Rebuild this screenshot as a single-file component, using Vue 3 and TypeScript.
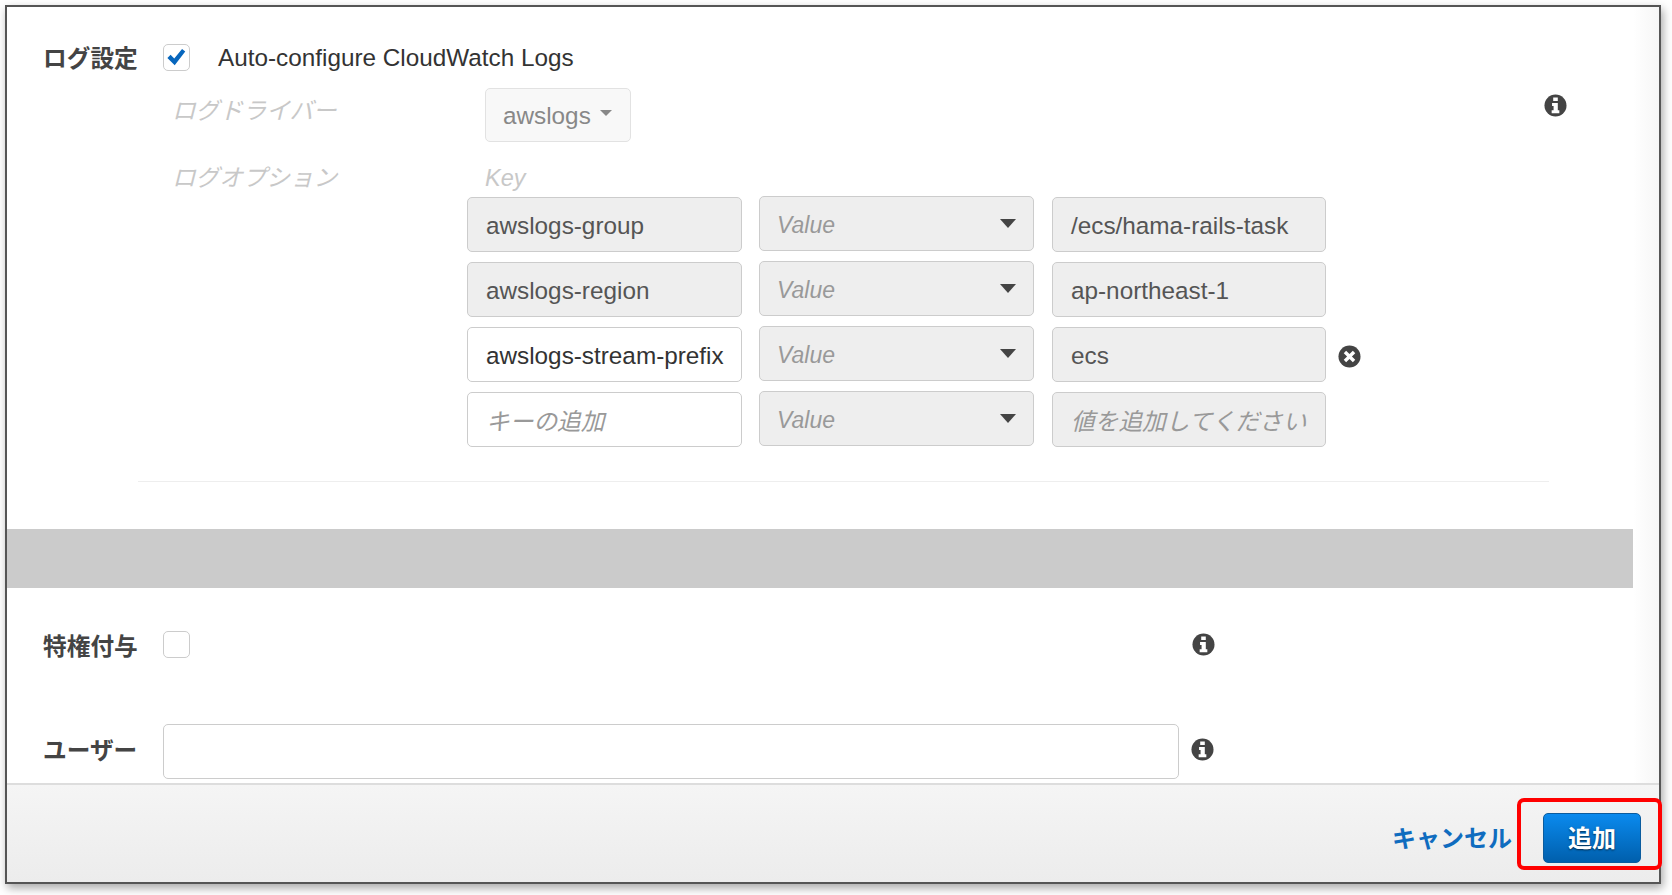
<template>
  <div class="page">
    <div class="window">
      <div class="scroll">
        <section class="log">
          <div class="log__head">
            <span class="label">ログ設定</span>
            <span class="check check--on">
              <svg viewBox="0 0 24 24" width="22" height="22">
                <path d="M1.500 13 5 9.500l4 4L17.500 3.300 21 6 9.500 21z" fill="#0766bd" />
              </svg>
            </span>
            <span class="log__title">Auto-configure CloudWatch Logs</span>
          </div>

          <div class="driver">
            <span class="sub-label">ログドライバー</span>
            <div class="driver__btn">awslogs<i class="caret caret--small"></i></div>
            <svg class="info info--driver" viewBox="0 0 24 24" width="23" height="23">
              <circle cx="12" cy="12" r="11.500" fill="#444" />
              <path d="M9.600 3.600h4.800v3.800H9.600zM8.400 9.400h6v7.600h1.600v3H8v-3h2v-4.600H8.400z" fill="#fff" />
            </svg>
          </div>

          <div class="option-head">
            <span class="sub-label">ログオプション</span>
            <span class="key-label">Key</span>
          </div>

          <div class="options">
            <div v-for="row in rows" :key="row.key || row.keyHolder" class="option-row">
              <div class="field" :class="{ 'field--off': row.keyOff, 'field--holder': row.keyHolder }">
                {{ row.key || row.keyHolder }}
              </div>
              <div class="value-select">
                <span>Value</span>
                <i class="caret"></i>
              </div>
              <div class="field field--off field--value" :class="{ 'field--holder': row.valueHolder }">
                {{ row.value || row.valueHolder }}
              </div>
              <svg v-if="row.removable" class="remove" viewBox="0 0 24 24" width="23" height="23">
                <circle cx="12" cy="12" r="11.500" fill="#444" />
                <path d="M8.500 6 12 9.500 15.500 6 18 8.500 14.500 12 18 15.500 15.500 18 12 14.500 8.500 18 6 15.500 9.500 12 6 8.500z" fill="#fff" />
              </svg>
            </div>
          </div>
          <hr class="rule" />
        </section>

        <div class="band"></div>

        <div class="row row--priv">
          <span class="label">特権付与</span>
          <span class="check"></span>
          <svg class="info info--priv" viewBox="0 0 24 24" width="23" height="23">
            <circle cx="12" cy="12" r="11.500" fill="#444" />
            <path d="M9.600 3.600h4.800v3.800H9.600zM8.400 9.400h6v7.600h1.600v3H8v-3h2v-4.600H8.400z" fill="#fff" />
          </svg>
        </div>

        <div class="row row--user">
          <span class="label label--up">ユーザー</span>
          <div class="user-input"></div>
          <svg class="info info--up" viewBox="0 0 24 24" width="23" height="23">
            <circle cx="12" cy="12" r="11.500" fill="#444" />
            <path d="M9.600 3.600h4.800v3.800H9.600zM8.400 9.400h6v7.600h1.600v3H8v-3h2v-4.600H8.400z" fill="#fff" />
          </svg>
        </div>
      </div>

      <footer class="footer">
        <a class="cancel">キャンセル</a>
        <button class="add" type="button">追加</button>
      </footer>
    </div>
    <div class="highlight"></div>
  </div>
</template>

<script setup lang="ts">
interface OptionRow {
  key?: string;
  keyHolder?: string;
  keyOff?: boolean;
  value?: string;
  valueHolder?: string;
  removable?: boolean;
}

const rows: OptionRow[] = [
  { key: 'awslogs-group', keyOff: true, value: '/ecs/hama-rails-task' },
  { key: 'awslogs-region', keyOff: true, value: 'ap-northeast-1' },
  { key: 'awslogs-stream-prefix', value: 'ecs', removable: true },
  { keyHolder: 'キーの追加', valueHolder: '値を追加してください' },
];
</script>

<style>
html,
body {
  margin: 0;
  background: #fff;
}
</style>

<style scoped>
.page {
  position: relative;
  width: 1672px;
  height: 895px;
  padding: 5px 0 0 5px;
  box-sizing: border-box;
  font-family: "Liberation Sans", "Noto Sans CJK JP", sans-serif;
  color: #444;
  overflow: hidden;
}

.window {
  width: 1656px;
  height: 879px;
  box-sizing: border-box;
  border: 2px solid #555;
  background: #fff;
  box-shadow: 2px 4px 9px rgba(0, 0, 0, 0.35);
  display: flex;
  flex-direction: column;
}

.scroll {
  flex: 1;
  min-height: 0;
  overflow: hidden;
  background: linear-gradient(to right, #fff 1626px, #f6f6f6 100%);
}

.log {
  background: #fff;
  width: 1626px;
  height: 522px;
  box-sizing: border-box;
  padding: 36px 0 0 36px;
}

.log__head {
  display: flex;
  align-items: center;
  height: 28px;
}

.label {
  width: 120px;
  flex: none;
  font-size: 23.700px;
  font-weight: 700;
  color: #444;
}

.label--up {
  margin-bottom: 5px;
}

.check {
  width: 27px;
  height: 27px;
  box-sizing: border-box;
  border: 1px solid #ccc;
  border-radius: 5px;
  background: #fff;
  display: flex;
  align-items: center;
  justify-content: center;
  flex: none;
}

.log__title {
  margin: 2px 0 0 28px;
  font-size: 24.300px;
  color: #333;
}

.driver {
  display: flex;
  align-items: flex-start;
  margin: 17px 0 0 129px;
  height: 54px;
}

.sub-label {
  width: 313px;
  flex: none;
  font-size: 23.600px;
  font-style: italic;
  color: #c8c8c8;
  line-height: 46px;
}

.driver__btn {
  width: 146px;
  height: 54px;
  box-sizing: border-box;
  padding: 2px 0 0 17px;
  border: 1px solid #e2e2e2;
  border-radius: 5px;
  background: #f8f8f8;
  color: #888;
  font-size: 24.300px;
  display: flex;
  align-items: center;
}

.caret {
  display: block;
  width: 0;
  height: 0;
  border-left: 8.500px solid transparent;
  border-right: 8.500px solid transparent;
  border-top: 9px solid #444;
}

.caret--small {
  margin: -6px 0 0 9px;
  border-left-width: 6px;
  border-right-width: 6px;
  border-top: 6px solid #888;
}

.info--driver {
  margin: 6px 0 0 913px;
  flex: none;
}

.option-head {
  display: flex;
  margin: 13px 0 0 129px;
  height: 41px;
}

.key-label {
  font-size: 23.500px;
  font-style: italic;
  color: #c8c8c8;
  line-height: 46px;
}

.options {
  margin: 0 0 0 424px;
  display: grid;
  row-gap: 10px;
}

.option-row {
  display: grid;
  grid-template-columns: 275px 275px 275px 23px;
  column-gap: 17px;
  align-items: start;
  height: 55px;
}

.field {
  height: 55px;
  margin-top: 1px;
  box-sizing: border-box;
  padding: 2px 0 0 18px;
  border: 1px solid #ccc;
  border-radius: 5px;
  background: #fff;
  font-size: 24.300px;
  color: #333;
  display: flex;
  align-items: center;
  white-space: nowrap;
  overflow: hidden;
}

.field--off {
  background: #eee;
  color: #555;
}

.field--holder {
  padding-top: 0;
  font-style: italic;
  color: #999;
  font-size: 23.700px;
}

.field--value {
  margin-left: 1px;
}

.value-select {
  height: 55px;
  box-sizing: border-box;
  padding: 4px 17px 0;
  border: 1px solid #ccc;
  border-radius: 5px;
  background: #eee;
  font-size: 23px;
  font-style: italic;
  color: #999;
  display: flex;
  align-items: center;
  justify-content: space-between;
}

.value-select .caret {
  margin-top: -4px;
}

.remove {
  align-self: center;
  margin: 4px 0 0 -5px;
}

.rule {
  margin: 35px 0 0 95px;
  width: 1411px;
  height: 1px;
  border: 0;
  background: #eee;
}

.band {
  width: 1626px;
  height: 59px;
  background: #cbcbcb;
}

.row {
  display: flex;
  align-items: center;
  padding-left: 36px;
}

.row--priv {
  height: 27px;
  margin-top: 43px;
}

.row--user {
  height: 55px;
  margin-top: 66px;
}

.info--priv {
  margin-left: 1002px;
}

.info--up {
  margin-bottom: 5px;
}

.user-input {
  width: 1016px;
  height: 55px;
  box-sizing: border-box;
  border: 1px solid #ccc;
  border-radius: 5px;
  background: #fff;
  margin-right: 12px;
}

.footer {
  height: 99px;
  flex: none;
  box-sizing: border-box;
  border-top: 2px solid #ddd;
  background: linear-gradient(#f5f5f5, #ececec);
  display: flex;
  align-items: center;
  justify-content: flex-end;
  padding: 9px 18px 0 0;
}

.cancel {
  font-size: 24px;
  font-weight: 700;
  color: #0f6cbf;
  margin: 0 31px 4px 0;
}

.add {
  width: 98px;
  height: 50px;
  border: 1px solid #0b5c9e;
  border-radius: 5px;
  background: linear-gradient(#0a8aee, #005fac);
  color: #fff;
  font: 700 24px "Liberation Sans", "Noto Sans CJK JP", sans-serif;
  text-shadow: 0 1px 2px rgba(0, 0, 0, 0.6);
  padding: 0 0 4px;
}

/* 注釈の赤枠 */
.highlight {
  position: absolute;
  left: 1517px;
  top: 798px;
  width: 145px;
  height: 72px;
  box-sizing: border-box;
  border: 4px solid #f00;
  border-radius: 7px;
}
</style>
